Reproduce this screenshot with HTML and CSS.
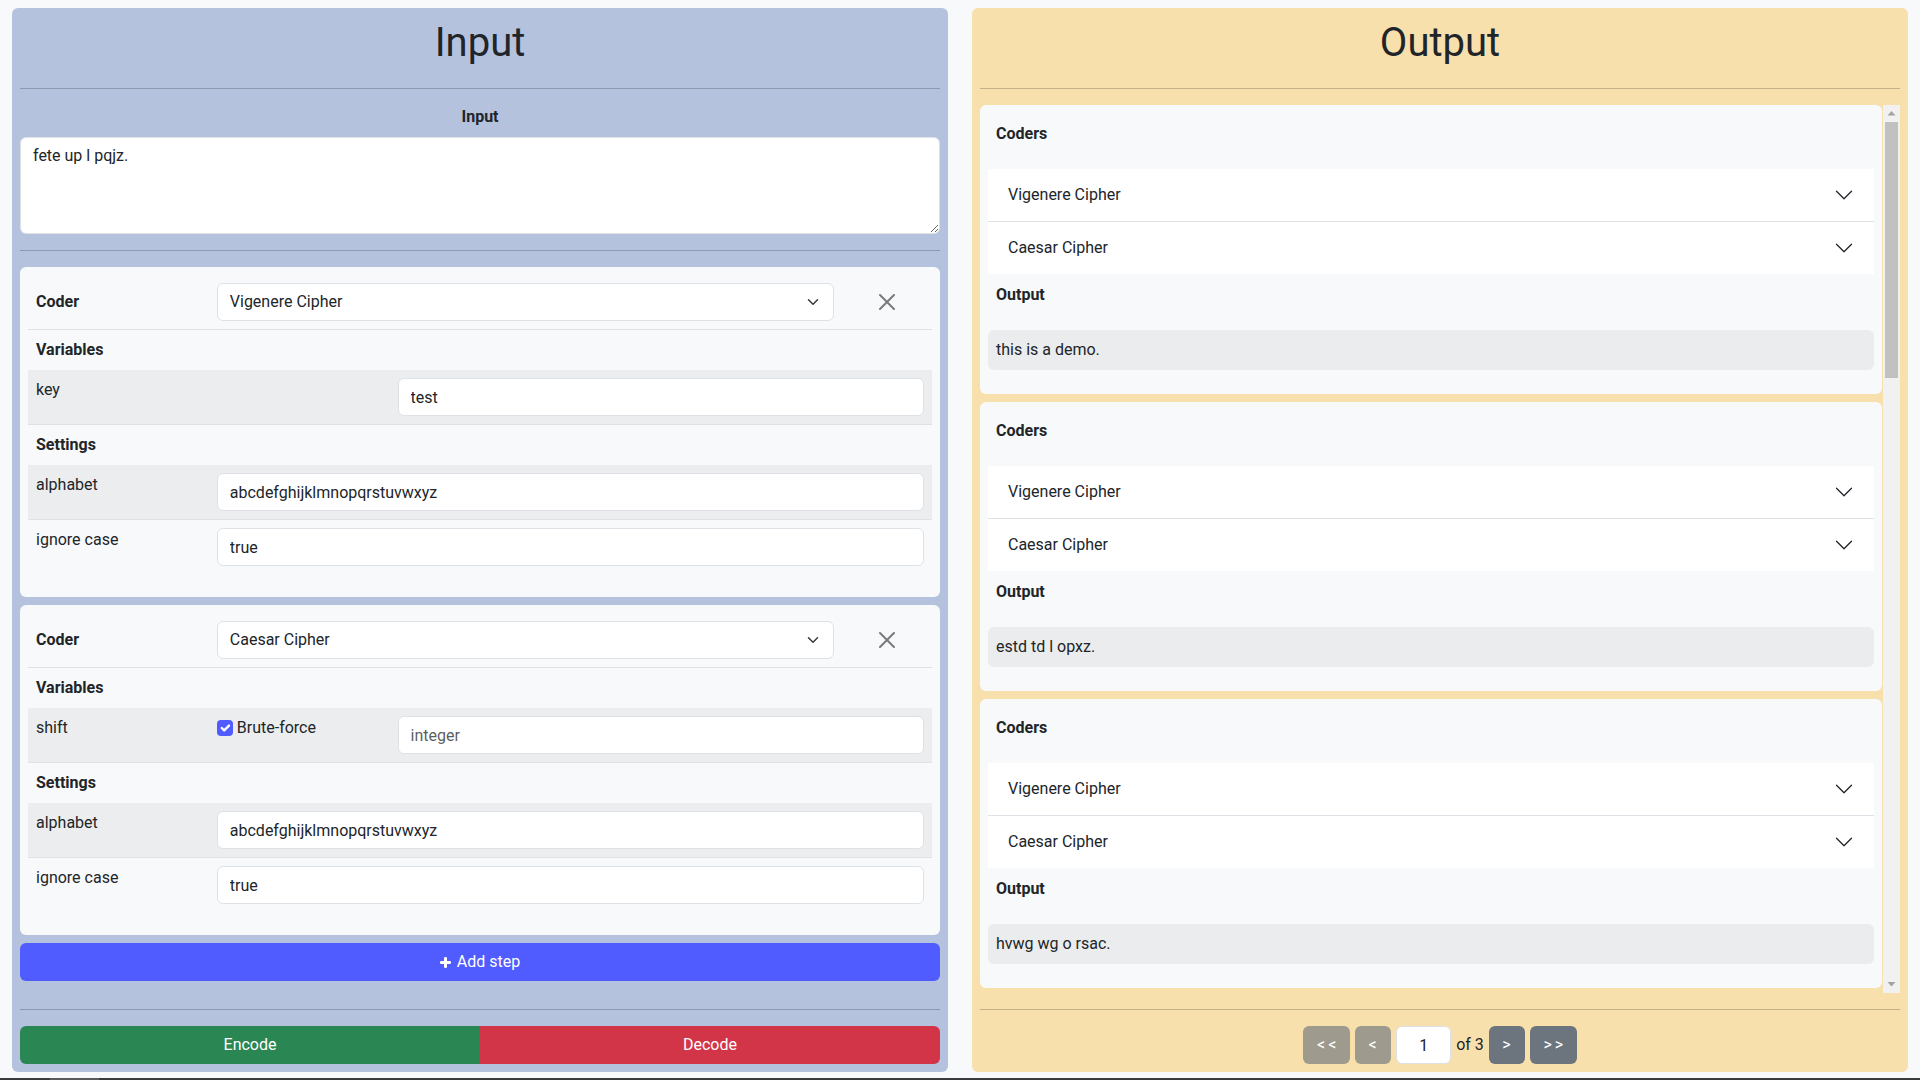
FILE: index.html
```html
<!DOCTYPE html>
<html lang="en">
<head>
<meta charset="utf-8">
<title>Coder</title>
<link rel="stylesheet" href="styles.css">
</head>
<body>
<main class="app">
  <section class="panel panel-input">
    <h1 class="title">Input</h1>
    <hr class="rule">
    <div class="input-label">Input</div>
    <textarea class="textarea">fete up l pqjz.</textarea>
    <hr class="rule">

    <section class="step">
      <div class="srow srow-coder">
        <div class="cell cell-mid cell-bold">Coder</div>
        <div class="cell cell-mid">
          <div class="select"><span>Vigenere Cipher</span><svg class="select-arrow" width="16" height="12" viewBox="0 0 16 16"><path fill="none" stroke="#343a40" stroke-linecap="round" stroke-linejoin="round" stroke-width="2" d="m2 5 6 6 6-6"/></svg></div>
        </div>
        <div class="cell cell-mid cell-close"><svg class="close-icon" width="16" height="16" viewBox="0 0 16 16"><path d="M.293.293a1 1 0 0 1 1.414 0L8 6.586 14.293.293a1 1 0 1 1 1.414 1.414L9.414 8l6.293 6.293a1 1 0 0 1-1.414 1.414L8 9.414l-6.293 6.293a1 1 0 0 1-1.414-1.414L6.586 8 .293 1.707a1 1 0 0 1 0-1.414z"/></svg></div>
      </div>
      <div class="shead">Variables</div>
      <div class="srow srow-var striped">
        <div class="cell">key</div>
        <div class="cell"></div>
        <div class="cell"><input class="field" value="test"></div>
      </div>
      <div class="shead">Settings</div>
      <div class="srow srow-set striped">
        <div class="cell">alphabet</div>
        <div class="cell"><input class="field" value="abcdefghijklmnopqrstuvwxyz"></div>
      </div>
      <div class="srow srow-set srow-last">
        <div class="cell">ignore case</div>
        <div class="cell"><input class="field" value="true"></div>
      </div>
    </section>

    <section class="step">
      <div class="srow srow-coder">
        <div class="cell cell-mid cell-bold">Coder</div>
        <div class="cell cell-mid">
          <div class="select"><span>Caesar Cipher</span><svg class="select-arrow" width="16" height="12" viewBox="0 0 16 16"><path fill="none" stroke="#343a40" stroke-linecap="round" stroke-linejoin="round" stroke-width="2" d="m2 5 6 6 6-6"/></svg></div>
        </div>
        <div class="cell cell-mid cell-close"><svg class="close-icon" width="16" height="16" viewBox="0 0 16 16"><path d="M.293.293a1 1 0 0 1 1.414 0L8 6.586 14.293.293a1 1 0 1 1 1.414 1.414L9.414 8l6.293 6.293a1 1 0 0 1-1.414 1.414L8 9.414l-6.293 6.293a1 1 0 0 1-1.414-1.414L6.586 8 .293 1.707a1 1 0 0 1 0-1.414z"/></svg></div>
      </div>
      <div class="shead">Variables</div>
      <div class="srow srow-var striped">
        <div class="cell">shift</div>
        <div class="cell">
          <label class="check"><span class="check-box"><svg width="16" height="16" viewBox="0 0 20 20"><path fill="none" stroke="#fff" stroke-linecap="round" stroke-linejoin="round" stroke-width="3" d="m6 10 3 3 6-6"/></svg></span>Brute-force</label>
        </div>
        <div class="cell"><input class="field" placeholder="integer"></div>
      </div>
      <div class="shead">Settings</div>
      <div class="srow srow-set striped">
        <div class="cell">alphabet</div>
        <div class="cell"><input class="field" value="abcdefghijklmnopqrstuvwxyz"></div>
      </div>
      <div class="srow srow-set srow-last">
        <div class="cell">ignore case</div>
        <div class="cell"><input class="field" value="true"></div>
      </div>
    </section>

    <button class="add-step"><svg width="11" height="11" viewBox="0 0 11 11"><rect x="0" y="4" width="11" height="3" rx="1.2" fill="#fff"/><rect x="4" y="0" width="3" height="11" rx="1.2" fill="#fff"/></svg><span>Add step</span></button>
    <hr class="rule">
    <div class="actions">
      <button class="act act-encode">Encode</button>
      <button class="act act-decode">Decode</button>
    </div>
  </section>

  <section class="panel panel-output">
    <h1 class="title">Output</h1>
    <hr class="rule">
    <div class="results">
      <div class="results-list">
        <article class="rcard">
          <div class="rlabel">Coders</div>
          <div class="acc">
            <div class="acc-item"><span>Vigenere Cipher</span><svg class="chev" width="20" height="20" viewBox="0 0 16 16"><path fill="none" stroke="#212529" stroke-linecap="round" stroke-linejoin="round" d="M2 5L8 11L14 5"/></svg></div>
            <div class="acc-item"><span>Caesar Cipher</span><svg class="chev" width="20" height="20" viewBox="0 0 16 16"><path fill="none" stroke="#212529" stroke-linecap="round" stroke-linejoin="round" d="M2 5L8 11L14 5"/></svg></div>
          </div>
          <div class="rlabel rlabel-out">Output</div>
          <div class="rbox">this is a demo.</div>
        </article>
        <article class="rcard">
          <div class="rlabel">Coders</div>
          <div class="acc">
            <div class="acc-item"><span>Vigenere Cipher</span><svg class="chev" width="20" height="20" viewBox="0 0 16 16"><path fill="none" stroke="#212529" stroke-linecap="round" stroke-linejoin="round" d="M2 5L8 11L14 5"/></svg></div>
            <div class="acc-item"><span>Caesar Cipher</span><svg class="chev" width="20" height="20" viewBox="0 0 16 16"><path fill="none" stroke="#212529" stroke-linecap="round" stroke-linejoin="round" d="M2 5L8 11L14 5"/></svg></div>
          </div>
          <div class="rlabel rlabel-out">Output</div>
          <div class="rbox">estd td l opxz.</div>
        </article>
        <article class="rcard">
          <div class="rlabel">Coders</div>
          <div class="acc">
            <div class="acc-item"><span>Vigenere Cipher</span><svg class="chev" width="20" height="20" viewBox="0 0 16 16"><path fill="none" stroke="#212529" stroke-linecap="round" stroke-linejoin="round" d="M2 5L8 11L14 5"/></svg></div>
            <div class="acc-item"><span>Caesar Cipher</span><svg class="chev" width="20" height="20" viewBox="0 0 16 16"><path fill="none" stroke="#212529" stroke-linecap="round" stroke-linejoin="round" d="M2 5L8 11L14 5"/></svg></div>
          </div>
          <div class="rlabel rlabel-out">Output</div>
          <div class="rbox">hvwg wg o rsac.</div>
        </article>
      </div>
      <div class="vscroll" aria-hidden="true">
        <div class="vs-btn"><svg width="17" height="17" viewBox="0 0 17 17"><polygon points="4.5,10.5 8.5,6 12.5,10.5" fill="#a3a3a3"/></svg></div>
        <div class="vs-track"><div class="vs-thumb"></div></div>
        <div class="vs-btn"><svg width="17" height="17" viewBox="0 0 17 17"><polygon points="4.5,6 12.5,6 8.5,10.5" fill="#a3a3a3"/></svg></div>
      </div>
    </div>
    <hr class="rule">
    <nav class="pager">
      <button class="pbtn pbtn-wide is-disabled">&lt;&lt;</button>
      <button class="pbtn is-disabled">&lt;</button>
      <input class="pinput" value="1">
      <span class="pof">of 3</span>
      <button class="pbtn">&gt;</button>
      <button class="pbtn pbtn-wide">&gt;&gt;</button>
    </nav>
  </section>
</main>
<div class="taskbar"><div class="taskbar-thumb"></div></div>
</body>
</html>
```

FILE: styles.css
```css
* { box-sizing: border-box; }

html, body {
  margin: 0;
  padding: 0;
}

body {
  height: 1080px;
  overflow: hidden;
  display: flex;
  flex-direction: column;
  background: #f8f9fa;
  color: #212529;
  font-family: Roboto, "Liberation Sans", sans-serif;
  font-size: 16px;
  line-height: 1.5;
}

.app {
  flex: 1;
  min-height: 0;
  display: flex;
  gap: 24px;
  padding: 8px 12px 6px;
}

.panel {
  flex: 1;
  min-width: 0;
  display: flex;
  flex-direction: column;
  padding: 8px;
  border-radius: 6px;
}

.panel-input { background: #b4c2de; }
.panel-output { background: #f8e0ad; }

.title {
  margin: 3px 0 5px;
  font-size: 40px;
  line-height: 48px;
  font-weight: 400;
  text-align: center;
}

.rule {
  flex: none;
  height: 0;
  margin: 16px 0;
  border: 0;
  border-top: 1px solid rgba(33, 37, 41, 0.25);
}

.input-label {
  font-weight: 700;
  text-align: center;
  margin-bottom: 8px;
}

.textarea {
  flex: none;
  display: block;
  width: 100%;
  height: 97px;
  padding: 6px 12px;
  border: 1px solid #dee2e6;
  border-radius: 6px;
  background: #fff;
  color: #212529;
  font: inherit;
  line-height: 1.5;
}

/* step cards */
.step {
  flex: none;
  background: #f8f9fa;
  border-radius: 6px;
  padding: 8px 8px 23px;
  margin-bottom: 8px;
}

.srow {
  display: grid;
  border-bottom: 1px solid #dee2e6;
}

.srow-coder { grid-template-columns: 20% 70% 10%; }
.srow-var { grid-template-columns: 20% 20% 60%; }
.srow-set { grid-template-columns: 20% 80%; }
.srow-last { border-bottom: 0; }

.striped { background: #ecedee; }

.cell {
  padding: 8px;
  min-width: 0;
}

.cell-mid {
  display: flex;
  align-items: center;
}

.cell-bold { font-weight: 700; }

.cell-close { justify-content: center; }

.close-icon { fill: #000; opacity: 0.5; display: block; }

.shead {
  padding: 8px;
  font-weight: 700;
}

.select {
  width: 100%;
  height: 38px;
  display: flex;
  align-items: center;
  justify-content: space-between;
  padding: 6px 12px;
  border: 1px solid #dee2e6;
  border-radius: 6px;
  background: #fff;
}

.select-arrow { display: block; flex: none; }

.field {
  display: block;
  width: 100%;
  height: 38px;
  padding: 6px 12px;
  border: 1px solid #dee2e6;
  border-radius: 6px;
  background: #fff;
  color: #212529;
  font: inherit;
  line-height: 1.5;
  outline: none;
}

.field::placeholder { color: rgba(33, 37, 41, 0.75); }

.check {
  display: flex;
  align-items: flex-start;
  gap: 4px;
}

.check-box {
  flex: none;
  width: 16px;
  height: 16px;
  margin-top: 4px;
  border-radius: 4px;
  background: #505cff;
}

.check-box svg { display: block; }

.add-step {
  flex: none;
  display: flex;
  align-items: center;
  justify-content: center;
  gap: 6px;
  width: 100%;
  height: 38px;
  margin: 0 0 12px;
  padding: 0;
  border: 0;
  border-radius: 6px;
  background: #505cff;
  color: #fff;
  font: inherit;
}

.add-step svg { display: block; }

.actions {
  flex: none;
  display: flex;
}

.act {
  flex: 1;
  height: 38px;
  border: 0;
  padding: 6px 12px;
  color: #fff;
  font: inherit;
}

.act-encode {
  background: #2a8753;
  border-radius: 6px 0 0 6px;
}

.act-decode {
  background: #d33548;
  border-radius: 0 6px 6px 0;
}

/* output */
.results {
  flex: 1;
  min-height: 0;
  display: flex;
}

.results-list {
  flex: 1;
  min-width: 0;
  overflow: hidden;
}

.vscroll {
  flex: none;
  width: 17px;
  margin-left: 1px;
  display: flex;
  flex-direction: column;
  background: #f1f1f1;
}

.vs-btn {
  flex: none;
  height: 17px;
}

.vs-btn svg { display: block; }

.vs-track {
  flex: 1;
  padding: 0 2px;
}

.vs-thumb {
  height: 256px;
  background: #c1c1c1;
}

.rcard {
  background: #f8f9fa;
  border-radius: 6px;
  padding: 8px 8px 24px;
  margin-bottom: 8px;
}

.rcard:last-child { margin-bottom: 0; }

.rlabel {
  font-weight: 700;
  padding: 9px 8px 23px;
}

.acc { background: #fff; }

.acc-item {
  display: flex;
  align-items: center;
  justify-content: space-between;
  height: 52px;
  padding: 0 20px;
  background: #fff;
}

.acc-item + .acc-item { border-top: 1px solid #dee2e6; height: 53px; }

.chev { display: block; flex: none; }

.rbox {
  background: #ebeced;
  border-radius: 6px;
  padding: 8px;
}

.pager {
  flex: none;
  display: flex;
  align-items: center;
  justify-content: center;
  gap: 5px;
}

.pbtn {
  width: 36px;
  height: 38px;
  padding: 0;
  border: 0;
  border-radius: 6px;
  background: #6c757d;
  color: #fff;
  font: inherit;
  letter-spacing: 1px;
}

.pbtn-wide { width: 47px; letter-spacing: 3px; text-indent: 3px; }

.pbtn.is-disabled { background: #9e9a8d; }

.pinput {
  width: 55px;
  height: 38px;
  padding: 6px 8px;
  border: 1px solid #dee2e6;
  border-radius: 6px;
  background: #fff;
  color: #212529;
  font: inherit;
  text-align: center;
}

.pof { white-space: nowrap; }

.taskbar {
  flex: none;
  height: 2px;
  background: #3b3b3b;
}

.taskbar-thumb {
  width: 49px;
  height: 100%;
  margin-left: 50px;
  background: #5b5b5b;
}
```
